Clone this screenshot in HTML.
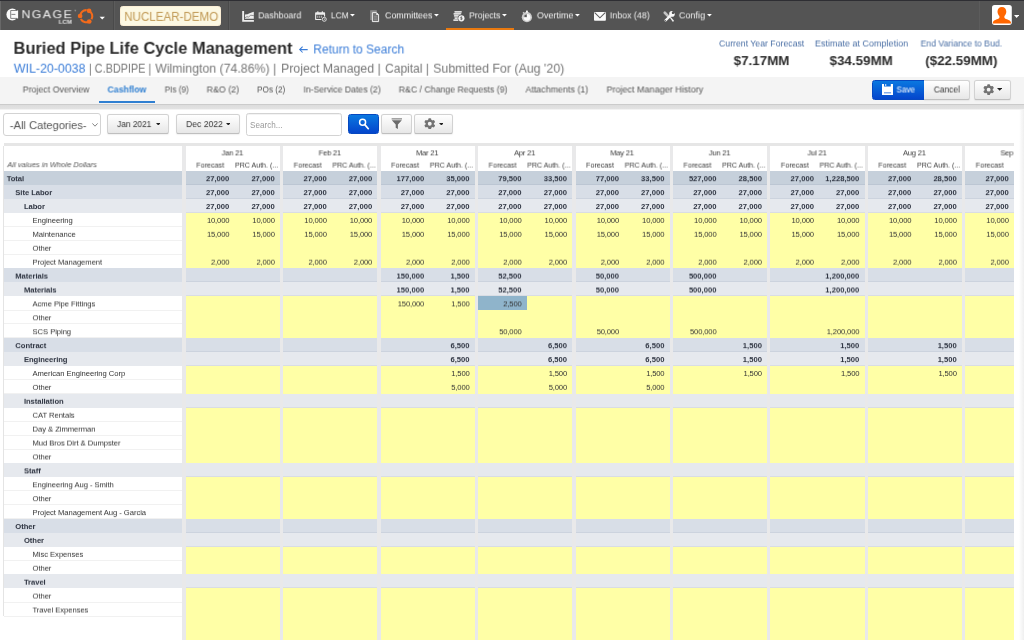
<!DOCTYPE html><html><head><meta charset="utf-8"><title>Buried Pipe Life Cycle Management</title><style>
html,body{margin:0;padding:0}body{width:1024px;height:640px;overflow:hidden;background:#fff;font-family:"Liberation Sans", sans-serif;position:relative}
.layer{position:absolute;left:0;top:0;width:1024px;height:640px;overflow:hidden}.a{position:absolute}.t{display:block;white-space:nowrap}.w{position:absolute;white-space:nowrap;filter:blur(0px)}.r{position:absolute;left:0;width:1024px;height:9px;filter:blur(0px)}
.n{position:absolute;white-space:nowrap;text-align:right;font-size:7.65px;line-height:9px;color:#333;width:60px;letter-spacing:-.16px}
.nb{font-weight:700;color:#2d3340;letter-spacing:0}
.l{position:absolute;white-space:nowrap;font-size:7.65px;line-height:9px;color:#333;letter-spacing:-.05px}
.lb{font-weight:700;color:#2d3340}
.btn{position:absolute;box-sizing:border-box;border:1px solid #d2d2d2;border-bottom-color:#bfbfbf;border-radius:2.6px;background:linear-gradient(#ffffff,#e7e7e7);box-shadow:0 0.7px 1.4px rgba(0,0,0,.06)}
.bp{position:absolute;box-sizing:border-box;border:1px solid #0648c0;border-radius:2.6px;background:linear-gradient(#0a78e0,#0445cc)}

</style></head><body><div id="page" class="layer">
<div class="a" style="left:0;top:0;width:1024px;height:29.6px;background:#545454"></div>
<div class="a" style="left:0;top:0;width:1024px;height:1.3px;background:#2e2e33"></div>
<div class="a" style="left:0;top:1.3px;width:1.1px;height:28.3px;background:#686868"></div>
<div class="a" style="left:113.2px;top:1.3px;width:0.7px;height:28.3px;background:#4a4a4a"></div><div class="a" style="left:113.9px;top:1.3px;width:0.7px;height:28.3px;background:#5c5c5c"></div>
<div class="a" style="left:228.3px;top:1.3px;width:0.7px;height:28.3px;background:#4a4a4a"></div><div class="a" style="left:229.0px;top:1.3px;width:0.7px;height:28.3px;background:#5c5c5c"></div>
<div class="a" style="left:978.6px;top:1.3px;width:0.7px;height:28.3px;background:#4a4a4a"></div><div class="a" style="left:979.3000000000001px;top:1.3px;width:0.7px;height:28.3px;background:#5c5c5c"></div>
<svg class="a" style="left:0;top:0" width="112" height="30" viewBox="0 0 112 30"><clipPath id="lc"><rect x="0" y="0" width="16.3" height="30"/></clipPath><circle cx="12.3" cy="14.5" r="5.9" fill="#fafafa" clip-path="url(#lc)"/><rect x="10.6" y="10.4" width="7.5" height="8.1" fill="#fafafa"/><path d="M17.2 10.5H10.7V18.4H17.2M11.400 14.400H15.400" fill="none" stroke="#5e5e5e" stroke-width=".75"/><g fill="none" stroke="#f26a1b" stroke-width="2.1"><path d="M89.06 10.81A6.1 6.1 0 0 1 91.48 19.25"/><path d="M89.25 21.48A6.1 6.1 0 0 1 80.81 19.06"/><path d="M80.10 15.99A6.1 6.1 0 0 1 86.63 10.11"/></g><g fill="#f26a1b"><circle cx="89.06" cy="10.81" r="2.35"/><circle cx="89.25" cy="21.48" r="2.35"/><circle cx="80.10" cy="15.99" r="2.35"/></g><path d="M99.6 16.8h5.3l-2.650 2.600z" fill="#fff"/><path d="M74.400 10.200h1.800M75.300 10.200v1.300" stroke="#bbb" stroke-width=".45" fill="none"/></svg>
<div class="a" style="left:120.3px;top:6.1px;width:101.1px;height:19.7px;box-sizing:border-box;background:#fcf8e3;border:0.7px solid #fbeed5;border-radius:2.6px"></div>
<svg class="a" style="left:0;top:0" width="1024" height="30" viewBox="0 0 1024 30" fill="#ededed"><path d="M242.2 11h1.9v9h9.8v1.800h-11.700z"/><path d="M245 18.800v-4.200l2.500-.4 2-1 2-.6 2.300-.8v7z"/><path d="M245 17.700l2-1.100 1.500.6 2-2 3.300.4" fill="none" stroke="#666" stroke-width=".7"/><path d="M316 12.300h8.200a.9.9 0 0 1 .9.9v6a.9.9 0 0 1-.9.9h-8.200a.9.9 0 0 1-.9-.9v-6a.9.9 0 0 1 .9-.9zM316.200 14.700v4.200h7.800v-4.200z" fill-rule="evenodd"/><rect x="317.200" y="11.200" width="1.300" height="1.800" rx=".5"/><rect x="321.700" y="11.200" width="1.300" height="1.800" rx=".5"/><rect x="317.200" y="15.700" width="1.100" height="2.200" opacity=".55"/><rect x="319.100" y="15.700" width="1.100" height="2.200" opacity=".55"/><rect x="321" y="15.700" width="1.100" height="2.200" opacity=".55"/><circle cx="324.300" cy="19.300" r="2.900" fill="#545454"/><circle cx="324.300" cy="19.300" r="2" fill="none" stroke="#e4e4e4" stroke-width=".9"/><path d="M324.300 18.200v1.300h.9" fill="none" stroke="#e4e4e4" stroke-width=".6"/><path d="M370.200 10.300h6.600v1.900h-4.800v7.800h-1.800z" fill="#909090"/><path d="M371.100 10.300v9.700M372 11v9" stroke="#7a7a7a" stroke-width=".35" fill="none"/><path d="M371.900 12.100h4.700l2.500 2.500v7.500h-7.200z" fill="#747474"/><path d="M372.400 12.600h4l2.200 2.200v6.800h-6.200z" fill="none" stroke="#ededed" stroke-width="1"/><path d="M376.300 12.400v2.500h2.600z" fill="#ededed"/><path d="M374 16.600h3.200M374 18h3.200M374 19.400h3.200" stroke="#9a9a9a" stroke-width=".6" fill="none"/><g fill="#dedede"><rect x="454.300" y="11" width="7.600" height="1.750" rx=".8"/><rect x="453.400" y="13.050" width="8" height="1.750" rx=".8"/><rect x="453.800" y="15.100" width="7" height="1.750" rx=".8"/><rect x="454.300" y="17.150" width="5" height="1.750" rx=".8"/><rect x="453.200" y="19.200" width="6" height="1.750" rx=".8"/></g><circle cx="461.400" cy="18.300" r="3.700" fill="#545454"/><circle cx="461.400" cy="18.300" r="3.100" fill="#f4f4f4"/><path d="M461.400 16.400v3.800M462.300 17.200h-1.300a.5.500 0 0 0 0 1.100h.800a.5.500 0 0 1 0 1.100h-1.400" stroke="#555" stroke-width=".6" fill="none"/><circle cx="526.900" cy="17.200" r="5.100" fill="#cdcdcd"/><rect x="526" y="10.500" width="1.900" height="2.200" rx=".5" fill="#f4f4f4"/><path d="M523 13.300l1-1" stroke="#cdcdcd" stroke-width="1.300"/><circle cx="527" cy="17.300" r="3.400" fill="#fbfbfb"/><path d="M527 17.300v-3.400a3.400 3.400 0 0 0-3.400 3.400z" fill="#9a9a9a"/><circle cx="525.700" cy="16" r="1" fill="#555"/><rect x="594" y="12" width="11.900" height="8.700" rx=".9" fill="#fafafa"/><path d="M594.700 12.700l5.250 5.100 5.250-5.100" fill="none" stroke="#5a5a5a" stroke-width="1.050"/><path d="M664.800 12.800l3.300 3.300" stroke="#c4c4c4" stroke-width="2.700" stroke-linecap="round" fill="none"/><path d="M668.300 16.300l1.400 1.400" stroke="#dcdcdc" stroke-width="1.300" fill="none"/><path d="M669.800 17.500l.900-.500 3.200 3.600-.300.900-.900.200z" fill="#f2f2f2"/><path d="M670.600 15.500l-5 4.900" stroke="#f6f6f6" stroke-width="2.300" stroke-linecap="round" fill="none"/><circle cx="672" cy="13.900" r="2.800" fill="#fafafa"/><path d="M672 13.900l1-3.300 2.600 2.400z" fill="#545454"/><circle cx="673" cy="12.800" r="1.250" fill="#545454"/><circle cx="665.400" cy="20.600" r=".7" fill="#666"/></svg>
<svg class="a" style="left:350.0px;top:14.1px" width="4.9" height="2.5" viewBox="0 0 4.9 2.5"><path d="M0 0h4.9l-2.45 2.5z" fill="#fff"/></svg>
<svg class="a" style="left:433.9px;top:14.1px" width="4.9" height="2.5" viewBox="0 0 4.9 2.5"><path d="M0 0h4.9l-2.45 2.5z" fill="#fff"/></svg>
<svg class="a" style="left:502.2px;top:14.1px" width="4.9" height="2.5" viewBox="0 0 4.9 2.5"><path d="M0 0h4.9l-2.45 2.5z" fill="#fff"/></svg>
<svg class="a" style="left:575.2px;top:14.1px" width="4.9" height="2.5" viewBox="0 0 4.9 2.5"><path d="M0 0h4.9l-2.45 2.5z" fill="#fff"/></svg>
<svg class="a" style="left:706.9px;top:14.1px" width="4.9" height="2.5" viewBox="0 0 4.9 2.5"><path d="M0 0h4.9l-2.45 2.5z" fill="#fff"/></svg>
<svg class="a" style="left:1013.6px;top:14.9px" width="5.2" height="3.0" viewBox="0 0 5.2 3.0"><path d="M0 0h5.2l-2.6 3.0z" fill="#fff"/></svg>
<div class="a" style="left:446.2px;top:27.8px;width:68.1px;height:1.8px;background:#e9790f"></div>
<svg class="a" style="left:992.3px;top:5.3px" width="19.8" height="19.9" viewBox="0 0 19.8 19.9"><rect width="19.8" height="19.9" rx="2.6" fill="#fff"/><path d="M9.9 1.9c2.6 0 4.4 2 4.4 4.7 0 1.9-.8 3.6-1.9 4.5v1.3c0 .8 1 1.3 2.6 1.9 2.2.8 3.7 1.7 4 3.3v.9H.8v-.9c.3-1.6 1.8-2.5 4-3.3 1.6-.6 2.6-1.1 2.6-1.9v-1.3C6.300 10.2 5.500 8.500 5.500 6.600c0-2.700 1.800-4.700 4.400-4.700z" fill="#ff6600"/></svg>
<svg class="a" style="left:298px;top:44px" width="12" height="11" viewBox="0 0 12 11"><path d="M1.700 5.600h8M4.600 2.700L1.700 5.600l2.900 2.900" fill="none" stroke="#3b7dd8" stroke-width="1.050"/></svg>
<div class="a" style="left:0;top:77.2px;width:1024px;height:26.4px;background:#f4f4f4"></div>
<div class="a" style="left:0;top:103.7px;width:1024px;height:1px;background:#cbcbcb"></div>
<div class="a" style="left:0;top:104.7px;width:1024px;height:4.9px;background:linear-gradient(#dcdcdc,#e2e2e2 78%,#fff)"></div>
<div class="a" style="left:99.1px;top:100.8px;width:55.5px;height:2.2px;background:#2f7fd1"></div>
<div class="bp" style="left:872.1px;top:80.1px;width:52.6px;height:19.6px;border-radius:2.6px 0 0 2.6px"></div>
<div class="btn" style="left:924.2px;top:80.1px;width:45.4px;height:19.6px;border-radius:0 2.6px 2.6px 0;border-left:none"></div>
<div class="btn" style="left:973.8px;top:80.1px;width:37.6px;height:19.6px"></div>
<svg class="a" style="left:881.9px;top:83.5px" width="11.2" height="11.3" viewBox="0 0 11.2 11.3"><path d="M0 0h2v2.600h6.800V0h2.200v11.200H0zM3.300 0h.9v2.100h-.9zM2 8.400h7.100v.9H2z" fill="#fff" fill-rule="evenodd"/></svg>
<svg class="a" style="left:982.9px;top:83.5px" width="11.3" height="11.3" viewBox="0 0 12 12" fill="#737373"><rect x="4.500" y=".2" width="3" height="3.200" rx=".9" transform="rotate(0 6 6)"/><rect x="4.500" y=".2" width="3" height="3.200" rx=".9" transform="rotate(60 6 6)"/><rect x="4.500" y=".2" width="3" height="3.200" rx=".9" transform="rotate(120 6 6)"/><rect x="4.500" y=".2" width="3" height="3.200" rx=".9" transform="rotate(180 6 6)"/><rect x="4.500" y=".2" width="3" height="3.200" rx=".9" transform="rotate(240 6 6)"/><rect x="4.500" y=".2" width="3" height="3.200" rx=".9" transform="rotate(300 6 6)"/><circle cx="6" cy="6" r="3.200" fill="none" stroke="#737373" stroke-width="2.300"/></svg>
<svg class="a" style="left:996.9px;top:88.2px" width="5.3" height="2.8" viewBox="0 0 5.3 2.8"><path d="M0 0h5.3l-2.65 2.8z" fill="#222"/></svg>
<div class="a" style="left:3.2px;top:112.6px;width:97.9px;height:23.1px;box-sizing:border-box;border:1px solid #d3d3d3;border-radius:3px;background:#fff"></div>
<svg class="a" style="left:92.4px;top:122.6px" width="6" height="4" viewBox="0 0 6 4"><path d="M.4.4L3 3.200 5.600.4" fill="none" stroke="#666" stroke-width=".8"/></svg>
<div class="btn" style="left:107.3px;top:114.4px;width:61.9px;height:19.5px"></div>
<div class="btn" style="left:175.9px;top:114.4px;width:64.4px;height:19.5px"></div>
<svg class="a" style="left:155.5px;top:122.6px" width="4.6" height="2.5" viewBox="0 0 4.6 2.5"><path d="M0 0h4.6l-2.3 2.5z" fill="#222"/></svg>
<svg class="a" style="left:225.8px;top:122.6px" width="4.6" height="2.5" viewBox="0 0 4.6 2.5"><path d="M0 0h4.6l-2.3 2.5z" fill="#222"/></svg>
<div class="a" style="left:246.1px;top:112.8px;width:96.4px;height:22.9px;box-sizing:border-box;border:1px solid #d3d3d3;border-radius:2.6px;background:#fff;box-shadow:inset 0 .7px .7px rgba(0,0,0,.07)"></div>
<div class="bp" style="left:348px;top:114.2px;width:30.9px;height:19.6px"></div>
<svg class="a" style="left:357px;top:116.500px" width="14" height="14" viewBox="0 0 14 14"><circle cx="5.600" cy="5.300" r="3" fill="none" stroke="#fff" stroke-width="1.500"/><path d="M7.800 7.600l3.500 4.100" stroke="#fff" stroke-width="1.700" stroke-linecap="round"/></svg>
<div class="btn" style="left:381.1px;top:114.2px;width:30.6px;height:19.6px"></div>
<svg class="a" style="left:391px;top:117.500px" width="12" height="12" viewBox="0 0 12 12" fill="#6b6b6b"><rect x=".6" y=".4" width="10.400" height="1"/><path d="M.8 2.200h10l-3.900 4.300v4.400l-2.200-1.100v-3.300z"/></svg>
<div class="btn" style="left:414.4px;top:114.2px;width:39.1px;height:19.6px"></div>
<svg class="a" style="left:423.9px;top:117.8px" width="11.5" height="11.5" viewBox="0 0 12 12" fill="#737373"><rect x="4.500" y=".2" width="3" height="3.200" rx=".9" transform="rotate(0 6 6)"/><rect x="4.500" y=".2" width="3" height="3.200" rx=".9" transform="rotate(60 6 6)"/><rect x="4.500" y=".2" width="3" height="3.200" rx=".9" transform="rotate(120 6 6)"/><rect x="4.500" y=".2" width="3" height="3.200" rx=".9" transform="rotate(180 6 6)"/><rect x="4.500" y=".2" width="3" height="3.200" rx=".9" transform="rotate(240 6 6)"/><rect x="4.500" y=".2" width="3" height="3.200" rx=".9" transform="rotate(300 6 6)"/><circle cx="6" cy="6" r="3.200" fill="none" stroke="#737373" stroke-width="2.300"/></svg>
<svg class="a" style="left:438.7px;top:122.7px" width="4.8" height="2.6" viewBox="0 0 4.8 2.6"><path d="M0 0h4.8l-2.4 2.6z" fill="#222"/></svg>
<div class="a" style="left:4.0px;top:142.8px;width:1010.0px;height:3.1px;background:#e6e6e6"></div>
<div class="a" style="left:182.2px;top:145.9px;width:3.700000000000017px;height:494.1px;background:#e9e9ea"></div>
<div class="a" style="left:280.00px;top:145.9px;width:3.33px;height:494.1px;background:#e9e9ea"></div>
<div class="a" style="left:377.43px;top:145.9px;width:3.33px;height:494.1px;background:#e9e9ea"></div>
<div class="a" style="left:474.86px;top:145.9px;width:3.33px;height:494.1px;background:#e9e9ea"></div>
<div class="a" style="left:572.29px;top:145.9px;width:3.33px;height:494.1px;background:#e9e9ea"></div>
<div class="a" style="left:669.72px;top:145.9px;width:3.33px;height:494.1px;background:#e9e9ea"></div>
<div class="a" style="left:767.15px;top:145.9px;width:3.33px;height:494.1px;background:#e9e9ea"></div>
<div class="a" style="left:864.58px;top:145.9px;width:3.33px;height:494.1px;background:#e9e9ea"></div>
<div class="a" style="left:962.01px;top:145.9px;width:3.33px;height:494.1px;background:#e9e9ea"></div>
<div class="a" style="left:3.4px;top:145.9px;width:0.7px;height:470.32px;background:#e4e4e4"></div>
<div class="a" style="left:4.0px;top:171.00px;width:178.2px;height:13.96px;background:#c6d0db"></div>
<div class="a" style="left:185.90px;top:171.00px;width:94.10px;height:13.96px;background:#c6d0db;box-shadow:inset 0 -0.7px 0 rgba(90,110,140,.13)"></div>
<div class="a" style="left:283.33px;top:171.00px;width:94.10px;height:13.96px;background:#c6d0db;box-shadow:inset 0 -0.7px 0 rgba(90,110,140,.13)"></div>
<div class="a" style="left:380.76px;top:171.00px;width:94.10px;height:13.96px;background:#c6d0db;box-shadow:inset 0 -0.7px 0 rgba(90,110,140,.13)"></div>
<div class="a" style="left:478.19px;top:171.00px;width:94.10px;height:13.96px;background:#c6d0db;box-shadow:inset 0 -0.7px 0 rgba(90,110,140,.13)"></div>
<div class="a" style="left:575.62px;top:171.00px;width:94.10px;height:13.96px;background:#c6d0db;box-shadow:inset 0 -0.7px 0 rgba(90,110,140,.13)"></div>
<div class="a" style="left:673.05px;top:171.00px;width:94.10px;height:13.96px;background:#c6d0db;box-shadow:inset 0 -0.7px 0 rgba(90,110,140,.13)"></div>
<div class="a" style="left:770.48px;top:171.00px;width:94.10px;height:13.96px;background:#c6d0db;box-shadow:inset 0 -0.7px 0 rgba(90,110,140,.13)"></div>
<div class="a" style="left:867.91px;top:171.00px;width:94.10px;height:13.96px;background:#c6d0db;box-shadow:inset 0 -0.7px 0 rgba(90,110,140,.13)"></div>
<div class="a" style="left:965.34px;top:171.00px;width:48.66px;height:13.96px;background:#c6d0db;box-shadow:inset 0 -0.7px 0 rgba(90,110,140,.13)"></div>
<div class="a" style="left:4.0px;top:184.91px;width:178.2px;height:13.96px;background:#d8dee7"></div>
<div class="a" style="left:185.90px;top:184.91px;width:94.10px;height:13.96px;background:#d8dee7;box-shadow:inset 0 -0.7px 0 rgba(90,110,140,.13)"></div>
<div class="a" style="left:283.33px;top:184.91px;width:94.10px;height:13.96px;background:#d8dee7;box-shadow:inset 0 -0.7px 0 rgba(90,110,140,.13)"></div>
<div class="a" style="left:380.76px;top:184.91px;width:94.10px;height:13.96px;background:#d8dee7;box-shadow:inset 0 -0.7px 0 rgba(90,110,140,.13)"></div>
<div class="a" style="left:478.19px;top:184.91px;width:94.10px;height:13.96px;background:#d8dee7;box-shadow:inset 0 -0.7px 0 rgba(90,110,140,.13)"></div>
<div class="a" style="left:575.62px;top:184.91px;width:94.10px;height:13.96px;background:#d8dee7;box-shadow:inset 0 -0.7px 0 rgba(90,110,140,.13)"></div>
<div class="a" style="left:673.05px;top:184.91px;width:94.10px;height:13.96px;background:#d8dee7;box-shadow:inset 0 -0.7px 0 rgba(90,110,140,.13)"></div>
<div class="a" style="left:770.48px;top:184.91px;width:94.10px;height:13.96px;background:#d8dee7;box-shadow:inset 0 -0.7px 0 rgba(90,110,140,.13)"></div>
<div class="a" style="left:867.91px;top:184.91px;width:94.10px;height:13.96px;background:#d8dee7;box-shadow:inset 0 -0.7px 0 rgba(90,110,140,.13)"></div>
<div class="a" style="left:965.34px;top:184.91px;width:48.66px;height:13.96px;background:#d8dee7;box-shadow:inset 0 -0.7px 0 rgba(90,110,140,.13)"></div>
<div class="a" style="left:4.0px;top:198.83px;width:178.2px;height:13.96px;background:#e6e9ee"></div>
<div class="a" style="left:185.90px;top:198.83px;width:94.10px;height:13.96px;background:#e6e9ee;box-shadow:inset 0 -0.7px 0 rgba(90,110,140,.13)"></div>
<div class="a" style="left:283.33px;top:198.83px;width:94.10px;height:13.96px;background:#e6e9ee;box-shadow:inset 0 -0.7px 0 rgba(90,110,140,.13)"></div>
<div class="a" style="left:380.76px;top:198.83px;width:94.10px;height:13.96px;background:#e6e9ee;box-shadow:inset 0 -0.7px 0 rgba(90,110,140,.13)"></div>
<div class="a" style="left:478.19px;top:198.83px;width:94.10px;height:13.96px;background:#e6e9ee;box-shadow:inset 0 -0.7px 0 rgba(90,110,140,.13)"></div>
<div class="a" style="left:575.62px;top:198.83px;width:94.10px;height:13.96px;background:#e6e9ee;box-shadow:inset 0 -0.7px 0 rgba(90,110,140,.13)"></div>
<div class="a" style="left:673.05px;top:198.83px;width:94.10px;height:13.96px;background:#e6e9ee;box-shadow:inset 0 -0.7px 0 rgba(90,110,140,.13)"></div>
<div class="a" style="left:770.48px;top:198.83px;width:94.10px;height:13.96px;background:#e6e9ee;box-shadow:inset 0 -0.7px 0 rgba(90,110,140,.13)"></div>
<div class="a" style="left:867.91px;top:198.83px;width:94.10px;height:13.96px;background:#e6e9ee;box-shadow:inset 0 -0.7px 0 rgba(90,110,140,.13)"></div>
<div class="a" style="left:965.34px;top:198.83px;width:48.66px;height:13.96px;background:#e6e9ee;box-shadow:inset 0 -0.7px 0 rgba(90,110,140,.13)"></div>
<div class="a" style="left:185.90px;top:212.74px;width:94.10px;height:13.96px;background:#ffffa6"></div>
<div class="a" style="left:283.33px;top:212.74px;width:94.10px;height:13.96px;background:#ffffa6"></div>
<div class="a" style="left:380.76px;top:212.74px;width:94.10px;height:13.96px;background:#ffffa6"></div>
<div class="a" style="left:478.19px;top:212.74px;width:94.10px;height:13.96px;background:#ffffa6"></div>
<div class="a" style="left:575.62px;top:212.74px;width:94.10px;height:13.96px;background:#ffffa6"></div>
<div class="a" style="left:673.05px;top:212.74px;width:94.10px;height:13.96px;background:#ffffa6"></div>
<div class="a" style="left:770.48px;top:212.74px;width:94.10px;height:13.96px;background:#ffffa6"></div>
<div class="a" style="left:867.91px;top:212.74px;width:94.10px;height:13.96px;background:#ffffa6"></div>
<div class="a" style="left:965.34px;top:212.74px;width:48.66px;height:13.96px;background:#ffffa6"></div>
<div class="a" style="left:4.0px;top:226.05px;width:178.2px;height:0.6px;background:#f1f1f1"></div>
<div class="a" style="left:185.90px;top:226.65px;width:94.10px;height:13.96px;background:#ffffa6"></div>
<div class="a" style="left:283.33px;top:226.65px;width:94.10px;height:13.96px;background:#ffffa6"></div>
<div class="a" style="left:380.76px;top:226.65px;width:94.10px;height:13.96px;background:#ffffa6"></div>
<div class="a" style="left:478.19px;top:226.65px;width:94.10px;height:13.96px;background:#ffffa6"></div>
<div class="a" style="left:575.62px;top:226.65px;width:94.10px;height:13.96px;background:#ffffa6"></div>
<div class="a" style="left:673.05px;top:226.65px;width:94.10px;height:13.96px;background:#ffffa6"></div>
<div class="a" style="left:770.48px;top:226.65px;width:94.10px;height:13.96px;background:#ffffa6"></div>
<div class="a" style="left:867.91px;top:226.65px;width:94.10px;height:13.96px;background:#ffffa6"></div>
<div class="a" style="left:965.34px;top:226.65px;width:48.66px;height:13.96px;background:#ffffa6"></div>
<div class="a" style="left:4.0px;top:239.97px;width:178.2px;height:0.6px;background:#f1f1f1"></div>
<div class="a" style="left:185.90px;top:240.56px;width:94.10px;height:13.96px;background:#ffffa6"></div>
<div class="a" style="left:283.33px;top:240.56px;width:94.10px;height:13.96px;background:#ffffa6"></div>
<div class="a" style="left:380.76px;top:240.56px;width:94.10px;height:13.96px;background:#ffffa6"></div>
<div class="a" style="left:478.19px;top:240.56px;width:94.10px;height:13.96px;background:#ffffa6"></div>
<div class="a" style="left:575.62px;top:240.56px;width:94.10px;height:13.96px;background:#ffffa6"></div>
<div class="a" style="left:673.05px;top:240.56px;width:94.10px;height:13.96px;background:#ffffa6"></div>
<div class="a" style="left:770.48px;top:240.56px;width:94.10px;height:13.96px;background:#ffffa6"></div>
<div class="a" style="left:867.91px;top:240.56px;width:94.10px;height:13.96px;background:#ffffa6"></div>
<div class="a" style="left:965.34px;top:240.56px;width:48.66px;height:13.96px;background:#ffffa6"></div>
<div class="a" style="left:4.0px;top:253.88px;width:178.2px;height:0.6px;background:#f1f1f1"></div>
<div class="a" style="left:185.90px;top:254.48px;width:94.10px;height:13.96px;background:#ffffa6"></div>
<div class="a" style="left:283.33px;top:254.48px;width:94.10px;height:13.96px;background:#ffffa6"></div>
<div class="a" style="left:380.76px;top:254.48px;width:94.10px;height:13.96px;background:#ffffa6"></div>
<div class="a" style="left:478.19px;top:254.48px;width:94.10px;height:13.96px;background:#ffffa6"></div>
<div class="a" style="left:575.62px;top:254.48px;width:94.10px;height:13.96px;background:#ffffa6"></div>
<div class="a" style="left:673.05px;top:254.48px;width:94.10px;height:13.96px;background:#ffffa6"></div>
<div class="a" style="left:770.48px;top:254.48px;width:94.10px;height:13.96px;background:#ffffa6"></div>
<div class="a" style="left:867.91px;top:254.48px;width:94.10px;height:13.96px;background:#ffffa6"></div>
<div class="a" style="left:965.34px;top:254.48px;width:48.66px;height:13.96px;background:#ffffa6"></div>
<div class="a" style="left:4.0px;top:267.79px;width:178.2px;height:0.6px;background:#f1f1f1"></div>
<div class="a" style="left:4.0px;top:268.39px;width:178.2px;height:13.96px;background:#d8dee7"></div>
<div class="a" style="left:185.90px;top:268.39px;width:94.10px;height:13.96px;background:#d8dee7;box-shadow:inset 0 -0.7px 0 rgba(90,110,140,.13)"></div>
<div class="a" style="left:283.33px;top:268.39px;width:94.10px;height:13.96px;background:#d8dee7;box-shadow:inset 0 -0.7px 0 rgba(90,110,140,.13)"></div>
<div class="a" style="left:380.76px;top:268.39px;width:94.10px;height:13.96px;background:#d8dee7;box-shadow:inset 0 -0.7px 0 rgba(90,110,140,.13)"></div>
<div class="a" style="left:478.19px;top:268.39px;width:94.10px;height:13.96px;background:#d8dee7;box-shadow:inset 0 -0.7px 0 rgba(90,110,140,.13)"></div>
<div class="a" style="left:575.62px;top:268.39px;width:94.10px;height:13.96px;background:#d8dee7;box-shadow:inset 0 -0.7px 0 rgba(90,110,140,.13)"></div>
<div class="a" style="left:673.05px;top:268.39px;width:94.10px;height:13.96px;background:#d8dee7;box-shadow:inset 0 -0.7px 0 rgba(90,110,140,.13)"></div>
<div class="a" style="left:770.48px;top:268.39px;width:94.10px;height:13.96px;background:#d8dee7;box-shadow:inset 0 -0.7px 0 rgba(90,110,140,.13)"></div>
<div class="a" style="left:867.91px;top:268.39px;width:94.10px;height:13.96px;background:#d8dee7;box-shadow:inset 0 -0.7px 0 rgba(90,110,140,.13)"></div>
<div class="a" style="left:965.34px;top:268.39px;width:48.66px;height:13.96px;background:#d8dee7;box-shadow:inset 0 -0.7px 0 rgba(90,110,140,.13)"></div>
<div class="a" style="left:4.0px;top:282.30px;width:178.2px;height:13.96px;background:#e6e9ee"></div>
<div class="a" style="left:185.90px;top:282.30px;width:94.10px;height:13.96px;background:#e6e9ee;box-shadow:inset 0 -0.7px 0 rgba(90,110,140,.13)"></div>
<div class="a" style="left:283.33px;top:282.30px;width:94.10px;height:13.96px;background:#e6e9ee;box-shadow:inset 0 -0.7px 0 rgba(90,110,140,.13)"></div>
<div class="a" style="left:380.76px;top:282.30px;width:94.10px;height:13.96px;background:#e6e9ee;box-shadow:inset 0 -0.7px 0 rgba(90,110,140,.13)"></div>
<div class="a" style="left:478.19px;top:282.30px;width:94.10px;height:13.96px;background:#e6e9ee;box-shadow:inset 0 -0.7px 0 rgba(90,110,140,.13)"></div>
<div class="a" style="left:575.62px;top:282.30px;width:94.10px;height:13.96px;background:#e6e9ee;box-shadow:inset 0 -0.7px 0 rgba(90,110,140,.13)"></div>
<div class="a" style="left:673.05px;top:282.30px;width:94.10px;height:13.96px;background:#e6e9ee;box-shadow:inset 0 -0.7px 0 rgba(90,110,140,.13)"></div>
<div class="a" style="left:770.48px;top:282.30px;width:94.10px;height:13.96px;background:#e6e9ee;box-shadow:inset 0 -0.7px 0 rgba(90,110,140,.13)"></div>
<div class="a" style="left:867.91px;top:282.30px;width:94.10px;height:13.96px;background:#e6e9ee;box-shadow:inset 0 -0.7px 0 rgba(90,110,140,.13)"></div>
<div class="a" style="left:965.34px;top:282.30px;width:48.66px;height:13.96px;background:#e6e9ee;box-shadow:inset 0 -0.7px 0 rgba(90,110,140,.13)"></div>
<div class="a" style="left:185.90px;top:296.22px;width:94.10px;height:13.96px;background:#ffffa6"></div>
<div class="a" style="left:283.33px;top:296.22px;width:94.10px;height:13.96px;background:#ffffa6"></div>
<div class="a" style="left:380.76px;top:296.22px;width:94.10px;height:13.96px;background:#ffffa6"></div>
<div class="a" style="left:478.19px;top:296.22px;width:94.10px;height:13.96px;background:#ffffa6"></div>
<div class="a" style="left:575.62px;top:296.22px;width:94.10px;height:13.96px;background:#ffffa6"></div>
<div class="a" style="left:673.05px;top:296.22px;width:94.10px;height:13.96px;background:#ffffa6"></div>
<div class="a" style="left:770.48px;top:296.22px;width:94.10px;height:13.96px;background:#ffffa6"></div>
<div class="a" style="left:867.91px;top:296.22px;width:94.10px;height:13.96px;background:#ffffa6"></div>
<div class="a" style="left:965.34px;top:296.22px;width:48.66px;height:13.96px;background:#ffffa6"></div>
<div class="a" style="left:4.0px;top:309.53px;width:178.2px;height:0.6px;background:#f1f1f1"></div>
<div class="a" style="left:478.19px;top:296.22px;width:48.6px;height:13.91px;background:#8fb4cb"></div>
<div class="a" style="left:185.90px;top:310.13px;width:94.10px;height:13.96px;background:#ffffa6"></div>
<div class="a" style="left:283.33px;top:310.13px;width:94.10px;height:13.96px;background:#ffffa6"></div>
<div class="a" style="left:380.76px;top:310.13px;width:94.10px;height:13.96px;background:#ffffa6"></div>
<div class="a" style="left:478.19px;top:310.13px;width:94.10px;height:13.96px;background:#ffffa6"></div>
<div class="a" style="left:575.62px;top:310.13px;width:94.10px;height:13.96px;background:#ffffa6"></div>
<div class="a" style="left:673.05px;top:310.13px;width:94.10px;height:13.96px;background:#ffffa6"></div>
<div class="a" style="left:770.48px;top:310.13px;width:94.10px;height:13.96px;background:#ffffa6"></div>
<div class="a" style="left:867.91px;top:310.13px;width:94.10px;height:13.96px;background:#ffffa6"></div>
<div class="a" style="left:965.34px;top:310.13px;width:48.66px;height:13.96px;background:#ffffa6"></div>
<div class="a" style="left:4.0px;top:323.44px;width:178.2px;height:0.6px;background:#f1f1f1"></div>
<div class="a" style="left:185.90px;top:324.04px;width:94.10px;height:13.96px;background:#ffffa6"></div>
<div class="a" style="left:283.33px;top:324.04px;width:94.10px;height:13.96px;background:#ffffa6"></div>
<div class="a" style="left:380.76px;top:324.04px;width:94.10px;height:13.96px;background:#ffffa6"></div>
<div class="a" style="left:478.19px;top:324.04px;width:94.10px;height:13.96px;background:#ffffa6"></div>
<div class="a" style="left:575.62px;top:324.04px;width:94.10px;height:13.96px;background:#ffffa6"></div>
<div class="a" style="left:673.05px;top:324.04px;width:94.10px;height:13.96px;background:#ffffa6"></div>
<div class="a" style="left:770.48px;top:324.04px;width:94.10px;height:13.96px;background:#ffffa6"></div>
<div class="a" style="left:867.91px;top:324.04px;width:94.10px;height:13.96px;background:#ffffa6"></div>
<div class="a" style="left:965.34px;top:324.04px;width:48.66px;height:13.96px;background:#ffffa6"></div>
<div class="a" style="left:4.0px;top:337.36px;width:178.2px;height:0.6px;background:#f1f1f1"></div>
<div class="a" style="left:4.0px;top:337.96px;width:178.2px;height:13.96px;background:#d8dee7"></div>
<div class="a" style="left:185.90px;top:337.96px;width:94.10px;height:13.96px;background:#d8dee7;box-shadow:inset 0 -0.7px 0 rgba(90,110,140,.13)"></div>
<div class="a" style="left:283.33px;top:337.96px;width:94.10px;height:13.96px;background:#d8dee7;box-shadow:inset 0 -0.7px 0 rgba(90,110,140,.13)"></div>
<div class="a" style="left:380.76px;top:337.96px;width:94.10px;height:13.96px;background:#d8dee7;box-shadow:inset 0 -0.7px 0 rgba(90,110,140,.13)"></div>
<div class="a" style="left:478.19px;top:337.96px;width:94.10px;height:13.96px;background:#d8dee7;box-shadow:inset 0 -0.7px 0 rgba(90,110,140,.13)"></div>
<div class="a" style="left:575.62px;top:337.96px;width:94.10px;height:13.96px;background:#d8dee7;box-shadow:inset 0 -0.7px 0 rgba(90,110,140,.13)"></div>
<div class="a" style="left:673.05px;top:337.96px;width:94.10px;height:13.96px;background:#d8dee7;box-shadow:inset 0 -0.7px 0 rgba(90,110,140,.13)"></div>
<div class="a" style="left:770.48px;top:337.96px;width:94.10px;height:13.96px;background:#d8dee7;box-shadow:inset 0 -0.7px 0 rgba(90,110,140,.13)"></div>
<div class="a" style="left:867.91px;top:337.96px;width:94.10px;height:13.96px;background:#d8dee7;box-shadow:inset 0 -0.7px 0 rgba(90,110,140,.13)"></div>
<div class="a" style="left:965.34px;top:337.96px;width:48.66px;height:13.96px;background:#d8dee7;box-shadow:inset 0 -0.7px 0 rgba(90,110,140,.13)"></div>
<div class="a" style="left:4.0px;top:351.87px;width:178.2px;height:13.96px;background:#e6e9ee"></div>
<div class="a" style="left:185.90px;top:351.87px;width:94.10px;height:13.96px;background:#e6e9ee;box-shadow:inset 0 -0.7px 0 rgba(90,110,140,.13)"></div>
<div class="a" style="left:283.33px;top:351.87px;width:94.10px;height:13.96px;background:#e6e9ee;box-shadow:inset 0 -0.7px 0 rgba(90,110,140,.13)"></div>
<div class="a" style="left:380.76px;top:351.87px;width:94.10px;height:13.96px;background:#e6e9ee;box-shadow:inset 0 -0.7px 0 rgba(90,110,140,.13)"></div>
<div class="a" style="left:478.19px;top:351.87px;width:94.10px;height:13.96px;background:#e6e9ee;box-shadow:inset 0 -0.7px 0 rgba(90,110,140,.13)"></div>
<div class="a" style="left:575.62px;top:351.87px;width:94.10px;height:13.96px;background:#e6e9ee;box-shadow:inset 0 -0.7px 0 rgba(90,110,140,.13)"></div>
<div class="a" style="left:673.05px;top:351.87px;width:94.10px;height:13.96px;background:#e6e9ee;box-shadow:inset 0 -0.7px 0 rgba(90,110,140,.13)"></div>
<div class="a" style="left:770.48px;top:351.87px;width:94.10px;height:13.96px;background:#e6e9ee;box-shadow:inset 0 -0.7px 0 rgba(90,110,140,.13)"></div>
<div class="a" style="left:867.91px;top:351.87px;width:94.10px;height:13.96px;background:#e6e9ee;box-shadow:inset 0 -0.7px 0 rgba(90,110,140,.13)"></div>
<div class="a" style="left:965.34px;top:351.87px;width:48.66px;height:13.96px;background:#e6e9ee;box-shadow:inset 0 -0.7px 0 rgba(90,110,140,.13)"></div>
<div class="a" style="left:185.90px;top:365.78px;width:94.10px;height:13.96px;background:#ffffa6"></div>
<div class="a" style="left:283.33px;top:365.78px;width:94.10px;height:13.96px;background:#ffffa6"></div>
<div class="a" style="left:380.76px;top:365.78px;width:94.10px;height:13.96px;background:#ffffa6"></div>
<div class="a" style="left:478.19px;top:365.78px;width:94.10px;height:13.96px;background:#ffffa6"></div>
<div class="a" style="left:575.62px;top:365.78px;width:94.10px;height:13.96px;background:#ffffa6"></div>
<div class="a" style="left:673.05px;top:365.78px;width:94.10px;height:13.96px;background:#ffffa6"></div>
<div class="a" style="left:770.48px;top:365.78px;width:94.10px;height:13.96px;background:#ffffa6"></div>
<div class="a" style="left:867.91px;top:365.78px;width:94.10px;height:13.96px;background:#ffffa6"></div>
<div class="a" style="left:965.34px;top:365.78px;width:48.66px;height:13.96px;background:#ffffa6"></div>
<div class="a" style="left:4.0px;top:379.10px;width:178.2px;height:0.6px;background:#f1f1f1"></div>
<div class="a" style="left:185.90px;top:379.69px;width:94.10px;height:13.96px;background:#ffffa6"></div>
<div class="a" style="left:283.33px;top:379.69px;width:94.10px;height:13.96px;background:#ffffa6"></div>
<div class="a" style="left:380.76px;top:379.69px;width:94.10px;height:13.96px;background:#ffffa6"></div>
<div class="a" style="left:478.19px;top:379.69px;width:94.10px;height:13.96px;background:#ffffa6"></div>
<div class="a" style="left:575.62px;top:379.69px;width:94.10px;height:13.96px;background:#ffffa6"></div>
<div class="a" style="left:673.05px;top:379.69px;width:94.10px;height:13.96px;background:#ffffa6"></div>
<div class="a" style="left:770.48px;top:379.69px;width:94.10px;height:13.96px;background:#ffffa6"></div>
<div class="a" style="left:867.91px;top:379.69px;width:94.10px;height:13.96px;background:#ffffa6"></div>
<div class="a" style="left:965.34px;top:379.69px;width:48.66px;height:13.96px;background:#ffffa6"></div>
<div class="a" style="left:4.0px;top:393.01px;width:178.2px;height:0.6px;background:#f1f1f1"></div>
<div class="a" style="left:4.0px;top:393.61px;width:178.2px;height:13.96px;background:#e6e9ee"></div>
<div class="a" style="left:185.90px;top:393.61px;width:94.10px;height:13.96px;background:#e6e9ee;box-shadow:inset 0 -0.7px 0 rgba(90,110,140,.13)"></div>
<div class="a" style="left:283.33px;top:393.61px;width:94.10px;height:13.96px;background:#e6e9ee;box-shadow:inset 0 -0.7px 0 rgba(90,110,140,.13)"></div>
<div class="a" style="left:380.76px;top:393.61px;width:94.10px;height:13.96px;background:#e6e9ee;box-shadow:inset 0 -0.7px 0 rgba(90,110,140,.13)"></div>
<div class="a" style="left:478.19px;top:393.61px;width:94.10px;height:13.96px;background:#e6e9ee;box-shadow:inset 0 -0.7px 0 rgba(90,110,140,.13)"></div>
<div class="a" style="left:575.62px;top:393.61px;width:94.10px;height:13.96px;background:#e6e9ee;box-shadow:inset 0 -0.7px 0 rgba(90,110,140,.13)"></div>
<div class="a" style="left:673.05px;top:393.61px;width:94.10px;height:13.96px;background:#e6e9ee;box-shadow:inset 0 -0.7px 0 rgba(90,110,140,.13)"></div>
<div class="a" style="left:770.48px;top:393.61px;width:94.10px;height:13.96px;background:#e6e9ee;box-shadow:inset 0 -0.7px 0 rgba(90,110,140,.13)"></div>
<div class="a" style="left:867.91px;top:393.61px;width:94.10px;height:13.96px;background:#e6e9ee;box-shadow:inset 0 -0.7px 0 rgba(90,110,140,.13)"></div>
<div class="a" style="left:965.34px;top:393.61px;width:48.66px;height:13.96px;background:#e6e9ee;box-shadow:inset 0 -0.7px 0 rgba(90,110,140,.13)"></div>
<div class="a" style="left:185.90px;top:407.52px;width:94.10px;height:13.96px;background:#ffffa6"></div>
<div class="a" style="left:283.33px;top:407.52px;width:94.10px;height:13.96px;background:#ffffa6"></div>
<div class="a" style="left:380.76px;top:407.52px;width:94.10px;height:13.96px;background:#ffffa6"></div>
<div class="a" style="left:478.19px;top:407.52px;width:94.10px;height:13.96px;background:#ffffa6"></div>
<div class="a" style="left:575.62px;top:407.52px;width:94.10px;height:13.96px;background:#ffffa6"></div>
<div class="a" style="left:673.05px;top:407.52px;width:94.10px;height:13.96px;background:#ffffa6"></div>
<div class="a" style="left:770.48px;top:407.52px;width:94.10px;height:13.96px;background:#ffffa6"></div>
<div class="a" style="left:867.91px;top:407.52px;width:94.10px;height:13.96px;background:#ffffa6"></div>
<div class="a" style="left:965.34px;top:407.52px;width:48.66px;height:13.96px;background:#ffffa6"></div>
<div class="a" style="left:4.0px;top:420.83px;width:178.2px;height:0.6px;background:#f1f1f1"></div>
<div class="a" style="left:185.90px;top:421.43px;width:94.10px;height:13.96px;background:#ffffa6"></div>
<div class="a" style="left:283.33px;top:421.43px;width:94.10px;height:13.96px;background:#ffffa6"></div>
<div class="a" style="left:380.76px;top:421.43px;width:94.10px;height:13.96px;background:#ffffa6"></div>
<div class="a" style="left:478.19px;top:421.43px;width:94.10px;height:13.96px;background:#ffffa6"></div>
<div class="a" style="left:575.62px;top:421.43px;width:94.10px;height:13.96px;background:#ffffa6"></div>
<div class="a" style="left:673.05px;top:421.43px;width:94.10px;height:13.96px;background:#ffffa6"></div>
<div class="a" style="left:770.48px;top:421.43px;width:94.10px;height:13.96px;background:#ffffa6"></div>
<div class="a" style="left:867.91px;top:421.43px;width:94.10px;height:13.96px;background:#ffffa6"></div>
<div class="a" style="left:965.34px;top:421.43px;width:48.66px;height:13.96px;background:#ffffa6"></div>
<div class="a" style="left:4.0px;top:434.75px;width:178.2px;height:0.6px;background:#f1f1f1"></div>
<div class="a" style="left:185.90px;top:435.35px;width:94.10px;height:13.96px;background:#ffffa6"></div>
<div class="a" style="left:283.33px;top:435.35px;width:94.10px;height:13.96px;background:#ffffa6"></div>
<div class="a" style="left:380.76px;top:435.35px;width:94.10px;height:13.96px;background:#ffffa6"></div>
<div class="a" style="left:478.19px;top:435.35px;width:94.10px;height:13.96px;background:#ffffa6"></div>
<div class="a" style="left:575.62px;top:435.35px;width:94.10px;height:13.96px;background:#ffffa6"></div>
<div class="a" style="left:673.05px;top:435.35px;width:94.10px;height:13.96px;background:#ffffa6"></div>
<div class="a" style="left:770.48px;top:435.35px;width:94.10px;height:13.96px;background:#ffffa6"></div>
<div class="a" style="left:867.91px;top:435.35px;width:94.10px;height:13.96px;background:#ffffa6"></div>
<div class="a" style="left:965.34px;top:435.35px;width:48.66px;height:13.96px;background:#ffffa6"></div>
<div class="a" style="left:4.0px;top:448.66px;width:178.2px;height:0.6px;background:#f1f1f1"></div>
<div class="a" style="left:185.90px;top:449.26px;width:94.10px;height:13.96px;background:#ffffa6"></div>
<div class="a" style="left:283.33px;top:449.26px;width:94.10px;height:13.96px;background:#ffffa6"></div>
<div class="a" style="left:380.76px;top:449.26px;width:94.10px;height:13.96px;background:#ffffa6"></div>
<div class="a" style="left:478.19px;top:449.26px;width:94.10px;height:13.96px;background:#ffffa6"></div>
<div class="a" style="left:575.62px;top:449.26px;width:94.10px;height:13.96px;background:#ffffa6"></div>
<div class="a" style="left:673.05px;top:449.26px;width:94.10px;height:13.96px;background:#ffffa6"></div>
<div class="a" style="left:770.48px;top:449.26px;width:94.10px;height:13.96px;background:#ffffa6"></div>
<div class="a" style="left:867.91px;top:449.26px;width:94.10px;height:13.96px;background:#ffffa6"></div>
<div class="a" style="left:965.34px;top:449.26px;width:48.66px;height:13.96px;background:#ffffa6"></div>
<div class="a" style="left:4.0px;top:462.57px;width:178.2px;height:0.6px;background:#f1f1f1"></div>
<div class="a" style="left:4.0px;top:463.17px;width:178.2px;height:13.96px;background:#e6e9ee"></div>
<div class="a" style="left:185.90px;top:463.17px;width:94.10px;height:13.96px;background:#e6e9ee;box-shadow:inset 0 -0.7px 0 rgba(90,110,140,.13)"></div>
<div class="a" style="left:283.33px;top:463.17px;width:94.10px;height:13.96px;background:#e6e9ee;box-shadow:inset 0 -0.7px 0 rgba(90,110,140,.13)"></div>
<div class="a" style="left:380.76px;top:463.17px;width:94.10px;height:13.96px;background:#e6e9ee;box-shadow:inset 0 -0.7px 0 rgba(90,110,140,.13)"></div>
<div class="a" style="left:478.19px;top:463.17px;width:94.10px;height:13.96px;background:#e6e9ee;box-shadow:inset 0 -0.7px 0 rgba(90,110,140,.13)"></div>
<div class="a" style="left:575.62px;top:463.17px;width:94.10px;height:13.96px;background:#e6e9ee;box-shadow:inset 0 -0.7px 0 rgba(90,110,140,.13)"></div>
<div class="a" style="left:673.05px;top:463.17px;width:94.10px;height:13.96px;background:#e6e9ee;box-shadow:inset 0 -0.7px 0 rgba(90,110,140,.13)"></div>
<div class="a" style="left:770.48px;top:463.17px;width:94.10px;height:13.96px;background:#e6e9ee;box-shadow:inset 0 -0.7px 0 rgba(90,110,140,.13)"></div>
<div class="a" style="left:867.91px;top:463.17px;width:94.10px;height:13.96px;background:#e6e9ee;box-shadow:inset 0 -0.7px 0 rgba(90,110,140,.13)"></div>
<div class="a" style="left:965.34px;top:463.17px;width:48.66px;height:13.96px;background:#e6e9ee;box-shadow:inset 0 -0.7px 0 rgba(90,110,140,.13)"></div>
<div class="a" style="left:185.90px;top:477.09px;width:94.10px;height:13.96px;background:#ffffa6"></div>
<div class="a" style="left:283.33px;top:477.09px;width:94.10px;height:13.96px;background:#ffffa6"></div>
<div class="a" style="left:380.76px;top:477.09px;width:94.10px;height:13.96px;background:#ffffa6"></div>
<div class="a" style="left:478.19px;top:477.09px;width:94.10px;height:13.96px;background:#ffffa6"></div>
<div class="a" style="left:575.62px;top:477.09px;width:94.10px;height:13.96px;background:#ffffa6"></div>
<div class="a" style="left:673.05px;top:477.09px;width:94.10px;height:13.96px;background:#ffffa6"></div>
<div class="a" style="left:770.48px;top:477.09px;width:94.10px;height:13.96px;background:#ffffa6"></div>
<div class="a" style="left:867.91px;top:477.09px;width:94.10px;height:13.96px;background:#ffffa6"></div>
<div class="a" style="left:965.34px;top:477.09px;width:48.66px;height:13.96px;background:#ffffa6"></div>
<div class="a" style="left:4.0px;top:490.40px;width:178.2px;height:0.6px;background:#f1f1f1"></div>
<div class="a" style="left:185.90px;top:491.00px;width:94.10px;height:13.96px;background:#ffffa6"></div>
<div class="a" style="left:283.33px;top:491.00px;width:94.10px;height:13.96px;background:#ffffa6"></div>
<div class="a" style="left:380.76px;top:491.00px;width:94.10px;height:13.96px;background:#ffffa6"></div>
<div class="a" style="left:478.19px;top:491.00px;width:94.10px;height:13.96px;background:#ffffa6"></div>
<div class="a" style="left:575.62px;top:491.00px;width:94.10px;height:13.96px;background:#ffffa6"></div>
<div class="a" style="left:673.05px;top:491.00px;width:94.10px;height:13.96px;background:#ffffa6"></div>
<div class="a" style="left:770.48px;top:491.00px;width:94.10px;height:13.96px;background:#ffffa6"></div>
<div class="a" style="left:867.91px;top:491.00px;width:94.10px;height:13.96px;background:#ffffa6"></div>
<div class="a" style="left:965.34px;top:491.00px;width:48.66px;height:13.96px;background:#ffffa6"></div>
<div class="a" style="left:4.0px;top:504.31px;width:178.2px;height:0.6px;background:#f1f1f1"></div>
<div class="a" style="left:185.90px;top:504.91px;width:94.10px;height:13.96px;background:#ffffa6"></div>
<div class="a" style="left:283.33px;top:504.91px;width:94.10px;height:13.96px;background:#ffffa6"></div>
<div class="a" style="left:380.76px;top:504.91px;width:94.10px;height:13.96px;background:#ffffa6"></div>
<div class="a" style="left:478.19px;top:504.91px;width:94.10px;height:13.96px;background:#ffffa6"></div>
<div class="a" style="left:575.62px;top:504.91px;width:94.10px;height:13.96px;background:#ffffa6"></div>
<div class="a" style="left:673.05px;top:504.91px;width:94.10px;height:13.96px;background:#ffffa6"></div>
<div class="a" style="left:770.48px;top:504.91px;width:94.10px;height:13.96px;background:#ffffa6"></div>
<div class="a" style="left:867.91px;top:504.91px;width:94.10px;height:13.96px;background:#ffffa6"></div>
<div class="a" style="left:965.34px;top:504.91px;width:48.66px;height:13.96px;background:#ffffa6"></div>
<div class="a" style="left:4.0px;top:518.23px;width:178.2px;height:0.6px;background:#f1f1f1"></div>
<div class="a" style="left:4.0px;top:518.83px;width:178.2px;height:13.96px;background:#d8dee7"></div>
<div class="a" style="left:185.90px;top:518.83px;width:94.10px;height:13.96px;background:#d8dee7;box-shadow:inset 0 -0.7px 0 rgba(90,110,140,.13)"></div>
<div class="a" style="left:283.33px;top:518.83px;width:94.10px;height:13.96px;background:#d8dee7;box-shadow:inset 0 -0.7px 0 rgba(90,110,140,.13)"></div>
<div class="a" style="left:380.76px;top:518.83px;width:94.10px;height:13.96px;background:#d8dee7;box-shadow:inset 0 -0.7px 0 rgba(90,110,140,.13)"></div>
<div class="a" style="left:478.19px;top:518.83px;width:94.10px;height:13.96px;background:#d8dee7;box-shadow:inset 0 -0.7px 0 rgba(90,110,140,.13)"></div>
<div class="a" style="left:575.62px;top:518.83px;width:94.10px;height:13.96px;background:#d8dee7;box-shadow:inset 0 -0.7px 0 rgba(90,110,140,.13)"></div>
<div class="a" style="left:673.05px;top:518.83px;width:94.10px;height:13.96px;background:#d8dee7;box-shadow:inset 0 -0.7px 0 rgba(90,110,140,.13)"></div>
<div class="a" style="left:770.48px;top:518.83px;width:94.10px;height:13.96px;background:#d8dee7;box-shadow:inset 0 -0.7px 0 rgba(90,110,140,.13)"></div>
<div class="a" style="left:867.91px;top:518.83px;width:94.10px;height:13.96px;background:#d8dee7;box-shadow:inset 0 -0.7px 0 rgba(90,110,140,.13)"></div>
<div class="a" style="left:965.34px;top:518.83px;width:48.66px;height:13.96px;background:#d8dee7;box-shadow:inset 0 -0.7px 0 rgba(90,110,140,.13)"></div>
<div class="a" style="left:4.0px;top:532.74px;width:178.2px;height:13.96px;background:#e6e9ee"></div>
<div class="a" style="left:185.90px;top:532.74px;width:94.10px;height:13.96px;background:#e6e9ee;box-shadow:inset 0 -0.7px 0 rgba(90,110,140,.13)"></div>
<div class="a" style="left:283.33px;top:532.74px;width:94.10px;height:13.96px;background:#e6e9ee;box-shadow:inset 0 -0.7px 0 rgba(90,110,140,.13)"></div>
<div class="a" style="left:380.76px;top:532.74px;width:94.10px;height:13.96px;background:#e6e9ee;box-shadow:inset 0 -0.7px 0 rgba(90,110,140,.13)"></div>
<div class="a" style="left:478.19px;top:532.74px;width:94.10px;height:13.96px;background:#e6e9ee;box-shadow:inset 0 -0.7px 0 rgba(90,110,140,.13)"></div>
<div class="a" style="left:575.62px;top:532.74px;width:94.10px;height:13.96px;background:#e6e9ee;box-shadow:inset 0 -0.7px 0 rgba(90,110,140,.13)"></div>
<div class="a" style="left:673.05px;top:532.74px;width:94.10px;height:13.96px;background:#e6e9ee;box-shadow:inset 0 -0.7px 0 rgba(90,110,140,.13)"></div>
<div class="a" style="left:770.48px;top:532.74px;width:94.10px;height:13.96px;background:#e6e9ee;box-shadow:inset 0 -0.7px 0 rgba(90,110,140,.13)"></div>
<div class="a" style="left:867.91px;top:532.74px;width:94.10px;height:13.96px;background:#e6e9ee;box-shadow:inset 0 -0.7px 0 rgba(90,110,140,.13)"></div>
<div class="a" style="left:965.34px;top:532.74px;width:48.66px;height:13.96px;background:#e6e9ee;box-shadow:inset 0 -0.7px 0 rgba(90,110,140,.13)"></div>
<div class="a" style="left:185.90px;top:546.65px;width:94.10px;height:13.96px;background:#ffffa6"></div>
<div class="a" style="left:283.33px;top:546.65px;width:94.10px;height:13.96px;background:#ffffa6"></div>
<div class="a" style="left:380.76px;top:546.65px;width:94.10px;height:13.96px;background:#ffffa6"></div>
<div class="a" style="left:478.19px;top:546.65px;width:94.10px;height:13.96px;background:#ffffa6"></div>
<div class="a" style="left:575.62px;top:546.65px;width:94.10px;height:13.96px;background:#ffffa6"></div>
<div class="a" style="left:673.05px;top:546.65px;width:94.10px;height:13.96px;background:#ffffa6"></div>
<div class="a" style="left:770.48px;top:546.65px;width:94.10px;height:13.96px;background:#ffffa6"></div>
<div class="a" style="left:867.91px;top:546.65px;width:94.10px;height:13.96px;background:#ffffa6"></div>
<div class="a" style="left:965.34px;top:546.65px;width:48.66px;height:13.96px;background:#ffffa6"></div>
<div class="a" style="left:4.0px;top:559.96px;width:178.2px;height:0.6px;background:#f1f1f1"></div>
<div class="a" style="left:185.90px;top:560.56px;width:94.10px;height:13.96px;background:#ffffa6"></div>
<div class="a" style="left:283.33px;top:560.56px;width:94.10px;height:13.96px;background:#ffffa6"></div>
<div class="a" style="left:380.76px;top:560.56px;width:94.10px;height:13.96px;background:#ffffa6"></div>
<div class="a" style="left:478.19px;top:560.56px;width:94.10px;height:13.96px;background:#ffffa6"></div>
<div class="a" style="left:575.62px;top:560.56px;width:94.10px;height:13.96px;background:#ffffa6"></div>
<div class="a" style="left:673.05px;top:560.56px;width:94.10px;height:13.96px;background:#ffffa6"></div>
<div class="a" style="left:770.48px;top:560.56px;width:94.10px;height:13.96px;background:#ffffa6"></div>
<div class="a" style="left:867.91px;top:560.56px;width:94.10px;height:13.96px;background:#ffffa6"></div>
<div class="a" style="left:965.34px;top:560.56px;width:48.66px;height:13.96px;background:#ffffa6"></div>
<div class="a" style="left:4.0px;top:573.88px;width:178.2px;height:0.6px;background:#f1f1f1"></div>
<div class="a" style="left:4.0px;top:574.48px;width:178.2px;height:13.96px;background:#e6e9ee"></div>
<div class="a" style="left:185.90px;top:574.48px;width:94.10px;height:13.96px;background:#e6e9ee;box-shadow:inset 0 -0.7px 0 rgba(90,110,140,.13)"></div>
<div class="a" style="left:283.33px;top:574.48px;width:94.10px;height:13.96px;background:#e6e9ee;box-shadow:inset 0 -0.7px 0 rgba(90,110,140,.13)"></div>
<div class="a" style="left:380.76px;top:574.48px;width:94.10px;height:13.96px;background:#e6e9ee;box-shadow:inset 0 -0.7px 0 rgba(90,110,140,.13)"></div>
<div class="a" style="left:478.19px;top:574.48px;width:94.10px;height:13.96px;background:#e6e9ee;box-shadow:inset 0 -0.7px 0 rgba(90,110,140,.13)"></div>
<div class="a" style="left:575.62px;top:574.48px;width:94.10px;height:13.96px;background:#e6e9ee;box-shadow:inset 0 -0.7px 0 rgba(90,110,140,.13)"></div>
<div class="a" style="left:673.05px;top:574.48px;width:94.10px;height:13.96px;background:#e6e9ee;box-shadow:inset 0 -0.7px 0 rgba(90,110,140,.13)"></div>
<div class="a" style="left:770.48px;top:574.48px;width:94.10px;height:13.96px;background:#e6e9ee;box-shadow:inset 0 -0.7px 0 rgba(90,110,140,.13)"></div>
<div class="a" style="left:867.91px;top:574.48px;width:94.10px;height:13.96px;background:#e6e9ee;box-shadow:inset 0 -0.7px 0 rgba(90,110,140,.13)"></div>
<div class="a" style="left:965.34px;top:574.48px;width:48.66px;height:13.96px;background:#e6e9ee;box-shadow:inset 0 -0.7px 0 rgba(90,110,140,.13)"></div>
<div class="a" style="left:185.90px;top:588.39px;width:94.10px;height:13.96px;background:#ffffa6"></div>
<div class="a" style="left:283.33px;top:588.39px;width:94.10px;height:13.96px;background:#ffffa6"></div>
<div class="a" style="left:380.76px;top:588.39px;width:94.10px;height:13.96px;background:#ffffa6"></div>
<div class="a" style="left:478.19px;top:588.39px;width:94.10px;height:13.96px;background:#ffffa6"></div>
<div class="a" style="left:575.62px;top:588.39px;width:94.10px;height:13.96px;background:#ffffa6"></div>
<div class="a" style="left:673.05px;top:588.39px;width:94.10px;height:13.96px;background:#ffffa6"></div>
<div class="a" style="left:770.48px;top:588.39px;width:94.10px;height:13.96px;background:#ffffa6"></div>
<div class="a" style="left:867.91px;top:588.39px;width:94.10px;height:13.96px;background:#ffffa6"></div>
<div class="a" style="left:965.34px;top:588.39px;width:48.66px;height:13.96px;background:#ffffa6"></div>
<div class="a" style="left:4.0px;top:601.70px;width:178.2px;height:0.6px;background:#f1f1f1"></div>
<div class="a" style="left:185.90px;top:602.30px;width:94.10px;height:13.96px;background:#ffffa6"></div>
<div class="a" style="left:283.33px;top:602.30px;width:94.10px;height:13.96px;background:#ffffa6"></div>
<div class="a" style="left:380.76px;top:602.30px;width:94.10px;height:13.96px;background:#ffffa6"></div>
<div class="a" style="left:478.19px;top:602.30px;width:94.10px;height:13.96px;background:#ffffa6"></div>
<div class="a" style="left:575.62px;top:602.30px;width:94.10px;height:13.96px;background:#ffffa6"></div>
<div class="a" style="left:673.05px;top:602.30px;width:94.10px;height:13.96px;background:#ffffa6"></div>
<div class="a" style="left:770.48px;top:602.30px;width:94.10px;height:13.96px;background:#ffffa6"></div>
<div class="a" style="left:867.91px;top:602.30px;width:94.10px;height:13.96px;background:#ffffa6"></div>
<div class="a" style="left:965.34px;top:602.30px;width:48.66px;height:13.96px;background:#ffffa6"></div>
<div class="a" style="left:4.0px;top:615.62px;width:178.2px;height:0.6px;background:#f1f1f1"></div>
<div class="a" style="left:185.90px;top:616.22px;width:94.10px;height:23.78px;background:#ffffa6"></div>
<div class="a" style="left:283.33px;top:616.22px;width:94.10px;height:23.78px;background:#ffffa6"></div>
<div class="a" style="left:380.76px;top:616.22px;width:94.10px;height:23.78px;background:#ffffa6"></div>
<div class="a" style="left:478.19px;top:616.22px;width:94.10px;height:23.78px;background:#ffffa6"></div>
<div class="a" style="left:575.62px;top:616.22px;width:94.10px;height:23.78px;background:#ffffa6"></div>
<div class="a" style="left:673.05px;top:616.22px;width:94.10px;height:23.78px;background:#ffffa6"></div>
<div class="a" style="left:770.48px;top:616.22px;width:94.10px;height:23.78px;background:#ffffa6"></div>
<div class="a" style="left:867.91px;top:616.22px;width:94.10px;height:23.78px;background:#ffffa6"></div>
<div class="a" style="left:965.34px;top:616.22px;width:48.66px;height:23.78px;background:#ffffa6"></div>
</div><div id="text" class="layer" style="will-change:transform">
<div class="r" style="top:174px;transform:translateY(0.20px) rotate(.0001deg)">
<span class="l lb" style="left:6.7px;top:0">Total</span>
<span class="n nb" style="left:169.35px;top:0">27,000</span>
<span class="n nb" style="left:214.75px;top:0">27,000</span>
<span class="n nb" style="left:266.78px;top:0">27,000</span>
<span class="n nb" style="left:312.18px;top:0">27,000</span>
<span class="n nb" style="left:364.21px;top:0">177,000</span>
<span class="n nb" style="left:409.61px;top:0">35,000</span>
<span class="n nb" style="left:461.64px;top:0">79,500</span>
<span class="n nb" style="left:507.04px;top:0">33,500</span>
<span class="n nb" style="left:559.07px;top:0">77,000</span>
<span class="n nb" style="left:604.47px;top:0">33,500</span>
<span class="n nb" style="left:656.50px;top:0">527,000</span>
<span class="n nb" style="left:701.90px;top:0">28,500</span>
<span class="n nb" style="left:753.93px;top:0">27,000</span>
<span class="n nb" style="left:799.33px;top:0">1,228,500</span>
<span class="n nb" style="left:851.36px;top:0">27,000</span>
<span class="n nb" style="left:896.76px;top:0">28,500</span>
<span class="n nb" style="left:948.79px;top:0">27,000</span>
</div>
<div class="r" style="top:188px;transform:translateY(0.11px) rotate(.0001deg)">
<span class="l lb" style="left:15.3px;top:0">Site Labor</span>
<span class="n nb" style="left:169.35px;top:0">27,000</span>
<span class="n nb" style="left:214.75px;top:0">27,000</span>
<span class="n nb" style="left:266.78px;top:0">27,000</span>
<span class="n nb" style="left:312.18px;top:0">27,000</span>
<span class="n nb" style="left:364.21px;top:0">27,000</span>
<span class="n nb" style="left:409.61px;top:0">27,000</span>
<span class="n nb" style="left:461.64px;top:0">27,000</span>
<span class="n nb" style="left:507.04px;top:0">27,000</span>
<span class="n nb" style="left:559.07px;top:0">27,000</span>
<span class="n nb" style="left:604.47px;top:0">27,000</span>
<span class="n nb" style="left:656.50px;top:0">27,000</span>
<span class="n nb" style="left:701.90px;top:0">27,000</span>
<span class="n nb" style="left:753.93px;top:0">27,000</span>
<span class="n nb" style="left:799.33px;top:0">27,000</span>
<span class="n nb" style="left:851.36px;top:0">27,000</span>
<span class="n nb" style="left:896.76px;top:0">27,000</span>
<span class="n nb" style="left:948.79px;top:0">27,000</span>
</div>
<div class="r" style="top:202px;transform:translateY(0.03px) rotate(.0001deg)">
<span class="l lb" style="left:23.9px;top:0">Labor</span>
<span class="n nb" style="left:169.35px;top:0">27,000</span>
<span class="n nb" style="left:214.75px;top:0">27,000</span>
<span class="n nb" style="left:266.78px;top:0">27,000</span>
<span class="n nb" style="left:312.18px;top:0">27,000</span>
<span class="n nb" style="left:364.21px;top:0">27,000</span>
<span class="n nb" style="left:409.61px;top:0">27,000</span>
<span class="n nb" style="left:461.64px;top:0">27,000</span>
<span class="n nb" style="left:507.04px;top:0">27,000</span>
<span class="n nb" style="left:559.07px;top:0">27,000</span>
<span class="n nb" style="left:604.47px;top:0">27,000</span>
<span class="n nb" style="left:656.50px;top:0">27,000</span>
<span class="n nb" style="left:701.90px;top:0">27,000</span>
<span class="n nb" style="left:753.93px;top:0">27,000</span>
<span class="n nb" style="left:799.33px;top:0">27,000</span>
<span class="n nb" style="left:851.36px;top:0">27,000</span>
<span class="n nb" style="left:896.76px;top:0">27,000</span>
<span class="n nb" style="left:948.79px;top:0">27,000</span>
</div>
<div class="r" style="top:215px;transform:translateY(0.94px) rotate(.0001deg)">
<span class="l" style="left:32.5px;top:0">Engineering</span>
<span class="n" style="left:169.35px;top:0">10,000</span>
<span class="n" style="left:214.75px;top:0">10,000</span>
<span class="n" style="left:266.78px;top:0">10,000</span>
<span class="n" style="left:312.18px;top:0">10,000</span>
<span class="n" style="left:364.21px;top:0">10,000</span>
<span class="n" style="left:409.61px;top:0">10,000</span>
<span class="n" style="left:461.64px;top:0">10,000</span>
<span class="n" style="left:507.04px;top:0">10,000</span>
<span class="n" style="left:559.07px;top:0">10,000</span>
<span class="n" style="left:604.47px;top:0">10,000</span>
<span class="n" style="left:656.50px;top:0">10,000</span>
<span class="n" style="left:701.90px;top:0">10,000</span>
<span class="n" style="left:753.93px;top:0">10,000</span>
<span class="n" style="left:799.33px;top:0">10,000</span>
<span class="n" style="left:851.36px;top:0">10,000</span>
<span class="n" style="left:896.76px;top:0">10,000</span>
<span class="n" style="left:948.79px;top:0">10,000</span>
</div>
<div class="r" style="top:229px;transform:translateY(0.85px) rotate(.0001deg)">
<span class="l" style="left:32.5px;top:0">Maintenance</span>
<span class="n" style="left:169.35px;top:0">15,000</span>
<span class="n" style="left:214.75px;top:0">15,000</span>
<span class="n" style="left:266.78px;top:0">15,000</span>
<span class="n" style="left:312.18px;top:0">15,000</span>
<span class="n" style="left:364.21px;top:0">15,000</span>
<span class="n" style="left:409.61px;top:0">15,000</span>
<span class="n" style="left:461.64px;top:0">15,000</span>
<span class="n" style="left:507.04px;top:0">15,000</span>
<span class="n" style="left:559.07px;top:0">15,000</span>
<span class="n" style="left:604.47px;top:0">15,000</span>
<span class="n" style="left:656.50px;top:0">15,000</span>
<span class="n" style="left:701.90px;top:0">15,000</span>
<span class="n" style="left:753.93px;top:0">15,000</span>
<span class="n" style="left:799.33px;top:0">15,000</span>
<span class="n" style="left:851.36px;top:0">15,000</span>
<span class="n" style="left:896.76px;top:0">15,000</span>
<span class="n" style="left:948.79px;top:0">15,000</span>
</div>
<div class="r" style="top:243px;transform:translateY(0.76px) rotate(.0001deg)">
<span class="l" style="left:32.5px;top:0">Other</span>
</div>
<div class="r" style="top:257px;transform:translateY(0.68px) rotate(.0001deg)">
<span class="l" style="left:32.5px;top:0">Project Management</span>
<span class="n" style="left:169.35px;top:0">2,000</span>
<span class="n" style="left:214.75px;top:0">2,000</span>
<span class="n" style="left:266.78px;top:0">2,000</span>
<span class="n" style="left:312.18px;top:0">2,000</span>
<span class="n" style="left:364.21px;top:0">2,000</span>
<span class="n" style="left:409.61px;top:0">2,000</span>
<span class="n" style="left:461.64px;top:0">2,000</span>
<span class="n" style="left:507.04px;top:0">2,000</span>
<span class="n" style="left:559.07px;top:0">2,000</span>
<span class="n" style="left:604.47px;top:0">2,000</span>
<span class="n" style="left:656.50px;top:0">2,000</span>
<span class="n" style="left:701.90px;top:0">2,000</span>
<span class="n" style="left:753.93px;top:0">2,000</span>
<span class="n" style="left:799.33px;top:0">2,000</span>
<span class="n" style="left:851.36px;top:0">2,000</span>
<span class="n" style="left:896.76px;top:0">2,000</span>
<span class="n" style="left:948.79px;top:0">2,000</span>
</div>
<div class="r" style="top:271px;transform:translateY(0.59px) rotate(.0001deg)">
<span class="l lb" style="left:15.3px;top:0">Materials</span>
<span class="n nb" style="left:364.21px;top:0">150,000</span>
<span class="n nb" style="left:409.61px;top:0">1,500</span>
<span class="n nb" style="left:461.64px;top:0">52,500</span>
<span class="n nb" style="left:559.07px;top:0">50,000</span>
<span class="n nb" style="left:656.50px;top:0">500,000</span>
<span class="n nb" style="left:799.33px;top:0">1,200,000</span>
</div>
<div class="r" style="top:285px;transform:translateY(0.50px) rotate(.0001deg)">
<span class="l lb" style="left:23.9px;top:0">Materials</span>
<span class="n nb" style="left:364.21px;top:0">150,000</span>
<span class="n nb" style="left:409.61px;top:0">1,500</span>
<span class="n nb" style="left:461.64px;top:0">52,500</span>
<span class="n nb" style="left:559.07px;top:0">50,000</span>
<span class="n nb" style="left:656.50px;top:0">500,000</span>
<span class="n nb" style="left:799.33px;top:0">1,200,000</span>
</div>
<div class="r" style="top:299px;transform:translateY(0.42px) rotate(.0001deg)">
<span class="l" style="left:32.5px;top:0">Acme Pipe Fittings</span>
<span class="n" style="left:364.21px;top:0">150,000</span>
<span class="n" style="left:409.61px;top:0">1,500</span>
<span class="n" style="left:461.64px;top:0">2,500</span>
</div>
<div class="r" style="top:313px;transform:translateY(0.33px) rotate(.0001deg)">
<span class="l" style="left:32.5px;top:0">Other</span>
</div>
<div class="r" style="top:327px;transform:translateY(0.24px) rotate(.0001deg)">
<span class="l" style="left:32.5px;top:0">SCS Piping</span>
<span class="n" style="left:461.64px;top:0">50,000</span>
<span class="n" style="left:559.07px;top:0">50,000</span>
<span class="n" style="left:656.50px;top:0">500,000</span>
<span class="n" style="left:799.33px;top:0">1,200,000</span>
</div>
<div class="r" style="top:341px;transform:translateY(0.16px) rotate(.0001deg)">
<span class="l lb" style="left:15.3px;top:0">Contract</span>
<span class="n nb" style="left:409.61px;top:0">6,500</span>
<span class="n nb" style="left:507.04px;top:0">6,500</span>
<span class="n nb" style="left:604.47px;top:0">6,500</span>
<span class="n nb" style="left:701.90px;top:0">1,500</span>
<span class="n nb" style="left:799.33px;top:0">1,500</span>
<span class="n nb" style="left:896.76px;top:0">1,500</span>
</div>
<div class="r" style="top:355px;transform:translateY(0.07px) rotate(.0001deg)">
<span class="l lb" style="left:23.9px;top:0">Engineering</span>
<span class="n nb" style="left:409.61px;top:0">6,500</span>
<span class="n nb" style="left:507.04px;top:0">6,500</span>
<span class="n nb" style="left:604.47px;top:0">6,500</span>
<span class="n nb" style="left:701.90px;top:0">1,500</span>
<span class="n nb" style="left:799.33px;top:0">1,500</span>
<span class="n nb" style="left:896.76px;top:0">1,500</span>
</div>
<div class="r" style="top:368px;transform:translateY(0.98px) rotate(.0001deg)">
<span class="l" style="left:32.5px;top:0">American Engineering Corp</span>
<span class="n" style="left:409.61px;top:0">1,500</span>
<span class="n" style="left:507.04px;top:0">1,500</span>
<span class="n" style="left:604.47px;top:0">1,500</span>
<span class="n" style="left:701.90px;top:0">1,500</span>
<span class="n" style="left:799.33px;top:0">1,500</span>
<span class="n" style="left:896.76px;top:0">1,500</span>
</div>
<div class="r" style="top:382px;transform:translateY(0.89px) rotate(.0001deg)">
<span class="l" style="left:32.5px;top:0">Other</span>
<span class="n" style="left:409.61px;top:0">5,000</span>
<span class="n" style="left:507.04px;top:0">5,000</span>
<span class="n" style="left:604.47px;top:0">5,000</span>
</div>
<div class="r" style="top:396px;transform:translateY(0.81px) rotate(.0001deg)">
<span class="l lb" style="left:23.9px;top:0">Installation</span>
</div>
<div class="r" style="top:410px;transform:translateY(0.72px) rotate(.0001deg)">
<span class="l" style="left:32.5px;top:0">CAT Rentals</span>
</div>
<div class="r" style="top:424px;transform:translateY(0.63px) rotate(.0001deg)">
<span class="l" style="left:32.5px;top:0">Day &amp; Zimmerman</span>
</div>
<div class="r" style="top:438px;transform:translateY(0.55px) rotate(.0001deg)">
<span class="l" style="left:32.5px;top:0">Mud Bros Dirt &amp; Dumpster</span>
</div>
<div class="r" style="top:452px;transform:translateY(0.46px) rotate(.0001deg)">
<span class="l" style="left:32.5px;top:0">Other</span>
</div>
<div class="r" style="top:466px;transform:translateY(0.37px) rotate(.0001deg)">
<span class="l lb" style="left:23.9px;top:0">Staff</span>
</div>
<div class="r" style="top:480px;transform:translateY(0.29px) rotate(.0001deg)">
<span class="l" style="left:32.5px;top:0">Engineering Aug - Smith</span>
</div>
<div class="r" style="top:494px;transform:translateY(0.20px) rotate(.0001deg)">
<span class="l" style="left:32.5px;top:0">Other</span>
</div>
<div class="r" style="top:508px;transform:translateY(0.11px) rotate(.0001deg)">
<span class="l" style="left:32.5px;top:0">Project Management Aug - Garcia</span>
</div>
<div class="r" style="top:522px;transform:translateY(0.03px) rotate(.0001deg)">
<span class="l lb" style="left:15.3px;top:0">Other</span>
</div>
<div class="r" style="top:535px;transform:translateY(0.94px) rotate(.0001deg)">
<span class="l lb" style="left:23.9px;top:0">Other</span>
</div>
<div class="r" style="top:549px;transform:translateY(0.85px) rotate(.0001deg)">
<span class="l" style="left:32.5px;top:0">Misc Expenses</span>
</div>
<div class="r" style="top:563px;transform:translateY(0.76px) rotate(.0001deg)">
<span class="l" style="left:32.5px;top:0">Other</span>
</div>
<div class="r" style="top:577px;transform:translateY(0.68px) rotate(.0001deg)">
<span class="l lb" style="left:23.9px;top:0">Travel</span>
</div>
<div class="r" style="top:591px;transform:translateY(0.59px) rotate(.0001deg)">
<span class="l" style="left:32.5px;top:0">Other</span>
</div>
<div class="r" style="top:605px;transform:translateY(0.50px) rotate(.0001deg)">
<span class="l" style="left:32.5px;top:0">Travel Expenses</span>
</div>
<div class="w" style="left:258px;top:10px;transform:translate(0.20px,0.40px) rotate(.0001deg)"><span class="t" style="font-size:8.9px;line-height:10px;color:#f2f2f2;transform:scaleX(0.9918);transform-origin:0 50%;">Dashboard</span></div>
<div class="w" style="left:330px;top:10px;transform:translate(0.90px,0.40px) rotate(.0001deg)"><span class="t" style="font-size:8.9px;line-height:10px;color:#f2f2f2;transform:scaleX(0.9422);transform-origin:0 50%;">LCM</span></div>
<div class="w" style="left:385px;top:10px;transform:translate(0.00px,0.40px) rotate(.0001deg)"><span class="t" style="font-size:8.9px;line-height:10px;color:#f2f2f2;transform:scaleX(1.0026);transform-origin:0 50%;">Committees</span></div>
<div class="w" style="left:469px;top:10px;transform:translate(0.10px,0.40px) rotate(.0001deg)"><span class="t" style="font-size:8.9px;line-height:10px;color:#f2f2f2;transform:scaleX(0.9783);transform-origin:0 50%;">Projects</span></div>
<div class="w" style="left:536px;top:10px;transform:translate(0.90px,0.40px) rotate(.0001deg)"><span class="t" style="font-size:8.9px;line-height:10px;color:#f2f2f2;transform:scaleX(1.0130);transform-origin:0 50%;">Overtime</span></div>
<div class="w" style="left:609px;top:10px;transform:translate(0.80px,0.40px) rotate(.0001deg)"><span class="t" style="font-size:8.9px;line-height:10px;color:#f2f2f2;transform:scaleX(0.9975);transform-origin:0 50%;">Inbox (48)</span></div>
<div class="w" style="left:678px;top:10px;transform:translate(0.90px,0.40px) rotate(.0001deg)"><span class="t" style="font-size:8.9px;line-height:10px;color:#f2f2f2;transform:scaleX(1.0199);transform-origin:0 50%;">Config</span></div>
<div class="w" style="left:124px;top:9px;transform:translate(0.30px,0.90px) rotate(.0001deg)"><span class="t" style="font-size:12.6px;line-height:14px;color:#c09853;transform:scaleX(0.9198);transform-origin:0 50%;">NUCLEAR-DEMO</span></div>
<div class="w" style="left:21px;top:8px;transform:translate(0.50px,0.20px) rotate(.0001deg)"><span class="t" style="font-size:10.6px;line-height:12px;color:#f0f0f0;letter-spacing:1.15px;transform:scaleX(1.17);transform-origin:0 0;">NGAGE</span></div>
<div class="w" style="left:58px;top:18px;transform:translate(0.60px,0.80px) rotate(.0001deg)"><span class="t" style="font-size:5.8px;line-height:6px;color:#e4e4e4;font-weight:700;transform:scaleX(1.0566);transform-origin:0 50%;">LCM</span></div>
<div class="w" style="left:13px;top:39px;transform:translate(0.50px,0.80px) rotate(.0001deg)"><span class="t" style="font-size:15.8px;line-height:17px;color:#2b2b2b;font-weight:700;transform:scaleX(1.0423);transform-origin:0 50%;">Buried Pipe Life Cycle Management</span></div>
<div class="w" style="left:313px;top:42px;transform:translate(0.30px,0.50px) rotate(.0001deg)"><span class="t" style="font-size:12.3px;line-height:14px;color:#3b7dd8;transform:scaleX(0.9785);transform-origin:0 50%;">Return to Search</span></div>
<div class="w" style="left:13px;top:61px;transform:translate(0.80px,0.70px) rotate(.0001deg)"><span class="t" style="font-size:12.4px;line-height:14px;color:#3b7dd8;">WIL-20-0038</span></div>
<div class="w" style="left:88px;top:61px;transform:translate(0.90px,0.70px) rotate(.0001deg)"><span class="t" style="font-size:12.4px;line-height:14px;color:#777;transform:scaleX(0.8750);transform-origin:0 50%;">| C.BDPIPE |</span></div>
<div class="w" style="left:155px;top:61px;transform:translate(0.30px,0.70px) rotate(.0001deg)"><span class="t" style="font-size:12.4px;line-height:14px;color:#777;transform:scaleX(0.9942);transform-origin:0 50%;">Wilmington (74.86%) |</span></div>
<div class="w" style="left:281px;top:61px;transform:translate(0.10px,0.70px) rotate(.0001deg)"><span class="t" style="font-size:12.4px;line-height:14px;color:#777;transform:scaleX(0.9933);transform-origin:0 50%;">Project Managed |</span></div>
<div class="w" style="left:385px;top:61px;transform:translate(0.10px,0.70px) rotate(.0001deg)"><span class="t" style="font-size:12.4px;line-height:14px;color:#777;transform:scaleX(0.9721);transform-origin:0 50%;">Capital |</span></div>
<div class="w" style="left:433px;top:61px;transform:translate(0.20px,0.70px) rotate(.0001deg)"><span class="t" style="font-size:12.4px;line-height:14px;color:#777;">Submitted For (Aug '20)</span></div>
<div class="w" style="left:719px;top:38px;transform:translate(0.00px,0.50px) rotate(.0001deg)"><span class="t" style="font-size:8.9px;line-height:10px;color:#4a6fa5;transform:scaleX(0.9820);transform-origin:0 50%;">Current Year Forecast</span></div>
<div class="w" style="left:814px;top:38px;transform:translate(0.90px,0.50px) rotate(.0001deg)"><span class="t" style="font-size:8.9px;line-height:10px;color:#4a6fa5;transform:scaleX(1.0154);transform-origin:0 50%;">Estimate at Completion</span></div>
<div class="w" style="left:920px;top:38px;transform:translate(0.60px,0.50px) rotate(.0001deg)"><span class="t" style="font-size:8.9px;line-height:10px;color:#4a6fa5;transform:scaleX(0.9789);transform-origin:0 50%;">End Variance to Bud.</span></div>
<div class="w" style="left:733px;top:54px;transform:translate(0.70px,0.10px) rotate(.0001deg)"><span class="t" style="font-size:12.2px;line-height:14px;color:#2b2b2b;font-weight:700;transform:scaleX(1.0955);transform-origin:0 50%;">$7.17MM</span></div>
<div class="w" style="left:829px;top:54px;transform:translate(0.60px,0.10px) rotate(.0001deg)"><span class="t" style="font-size:12.2px;line-height:14px;color:#2b2b2b;font-weight:700;transform:scaleX(1.0967);transform-origin:0 50%;">$34.59MM</span></div>
<div class="w" style="left:925px;top:54px;transform:translate(0.30px,0.10px) rotate(.0001deg)"><span class="t" style="font-size:12.2px;line-height:14px;color:#2b2b2b;font-weight:700;transform:scaleX(1.0984);transform-origin:0 50%;">($22.59MM)</span></div>
<div class="w" style="left:22px;top:84px;transform:translate(0.70px,0.50px) rotate(.0001deg)"><span class="t" style="font-size:8.9px;line-height:10px;color:#555;transform:scaleX(0.9939);transform-origin:0 50%;">Project Overview</span></div>
<div class="w" style="left:107px;top:84px;transform:translate(0.50px,0.50px) rotate(.0001deg)"><span class="t" style="font-size:8.9px;line-height:10px;color:#2f7fd1;font-weight:700;transform:scaleX(0.9851);transform-origin:0 50%;">Cashflow</span></div>
<div class="w" style="left:164px;top:84px;transform:translate(0.70px,0.50px) rotate(.0001deg)"><span class="t" style="font-size:8.9px;line-height:10px;color:#555;transform:scaleX(0.9168);transform-origin:0 50%;">PIs (9)</span></div>
<div class="w" style="left:206px;top:84px;transform:translate(0.60px,0.50px) rotate(.0001deg)"><span class="t" style="font-size:8.9px;line-height:10px;color:#555;transform:scaleX(0.9975);transform-origin:0 50%;">R&amp;O (2)</span></div>
<div class="w" style="left:257px;top:84px;transform:translate(0.00px,0.50px) rotate(.0001deg)"><span class="t" style="font-size:8.9px;line-height:10px;color:#555;transform:scaleX(0.9277);transform-origin:0 50%;">POs (2)</span></div>
<div class="w" style="left:303px;top:84px;transform:translate(0.40px,0.50px) rotate(.0001deg)"><span class="t" style="font-size:8.9px;line-height:10px;color:#555;transform:scaleX(0.9803);transform-origin:0 50%;">In-Service Dates (2)</span></div>
<div class="w" style="left:398px;top:84px;transform:translate(0.70px,0.50px) rotate(.0001deg)"><span class="t" style="font-size:8.9px;line-height:10px;color:#555;transform:scaleX(0.9843);transform-origin:0 50%;">R&amp;C / Change Requests (9)</span></div>
<div class="w" style="left:525px;top:84px;transform:translate(0.50px,0.50px) rotate(.0001deg)"><span class="t" style="font-size:8.9px;line-height:10px;color:#555;transform:scaleX(1.0018);transform-origin:0 50%;">Attachments (1)</span></div>
<div class="w" style="left:606px;top:84px;transform:translate(0.50px,0.50px) rotate(.0001deg)"><span class="t" style="font-size:8.9px;line-height:10px;color:#555;transform:scaleX(1.0164);transform-origin:0 50%;">Project Manager History</span></div>
<div class="w" style="left:896px;top:84px;transform:translate(0.50px,0.50px) rotate(.0001deg)"><span class="t" style="font-size:8.9px;line-height:10px;color:#fff;transform:scaleX(0.9176);transform-origin:0 50%;">Save</span></div>
<div class="w" style="left:933px;top:84px;transform:translate(0.80px,0.50px) rotate(.0001deg)"><span class="t" style="font-size:8.9px;line-height:10px;color:#333;transform:scaleX(0.9431);transform-origin:0 50%;">Cancel</span></div>
<div class="w" style="left:9px;top:118px;transform:translate(0.80px,0.10px) rotate(.0001deg)"><span class="t" style="font-size:11.8px;line-height:14px;color:#555;transform:scaleX(0.9441);transform-origin:0 50%;">-All Categories-</span></div>
<div class="w" style="left:117px;top:119px;transform:translate(0.20px,0.10px) rotate(.0001deg)"><span class="t" style="font-size:8.9px;line-height:10px;color:#333;transform:scaleX(0.9353);transform-origin:0 50%;">Jan 2021</span></div>
<div class="w" style="left:186px;top:119px;transform:translate(0.10px,0.10px) rotate(.0001deg)"><span class="t" style="font-size:8.9px;line-height:10px;color:#333;transform:scaleX(0.9702);transform-origin:0 50%;">Dec 2022</span></div>
<div class="w" style="left:250px;top:119px;transform:translate(0.00px,1.00px) rotate(.0001deg)"><span class="t" style="font-size:9.2px;line-height:10px;color:#999;transform:scaleX(0.8829);transform-origin:0 50%;">Search...</span></div>
<div class="w" style="left:7px;top:160px;transform:translate(0.40px,0.20px) rotate(.0001deg)"><span class="t" style="font-size:7.65px;line-height:9px;color:#555;font-style:italic;transform:scaleX(0.9898);transform-origin:0 50%;">All values in Whole Dollars</span></div>
<div class="w" style="left:232px;top:148px;transform:translate(calc(-50% + 0.35px),0.40px) rotate(.0001deg)"><span class="t" style="font-size:7.65px;line-height:9px;color:#3a3a3a;letter-spacing:-0.25px;">Jan 21</span></div>
<div class="w" style="left:196px;top:160px;transform:translate(0.30px,0.60px) rotate(.0001deg)"><span class="t" style="font-size:7.65px;line-height:9px;color:#3a3a3a;transform:scaleX(0.9393);transform-origin:0 50%;">Forecast</span></div>
<div class="w" style="left:235px;top:160px;transform:translate(0.00px,0.60px) rotate(.0001deg)"><span class="t" style="font-size:7.65px;line-height:9px;color:#3a3a3a;transform:scaleX(0.9253);transform-origin:0 50%;">PRC Auth. (...</span></div>
<div class="w" style="left:329px;top:148px;transform:translate(calc(-50% + 0.78px),0.40px) rotate(.0001deg)"><span class="t" style="font-size:7.65px;line-height:9px;color:#3a3a3a;letter-spacing:-0.25px;">Feb 21</span></div>
<div class="w" style="left:293px;top:160px;transform:translate(0.73px,0.60px) rotate(.0001deg)"><span class="t" style="font-size:7.65px;line-height:9px;color:#3a3a3a;transform:scaleX(0.9393);transform-origin:0 50%;">Forecast</span></div>
<div class="w" style="left:332px;top:160px;transform:translate(0.43px,0.60px) rotate(.0001deg)"><span class="t" style="font-size:7.65px;line-height:9px;color:#3a3a3a;transform:scaleX(0.9253);transform-origin:0 50%;">PRC Auth. (...</span></div>
<div class="w" style="left:427px;top:148px;transform:translate(calc(-50% + 0.21px),0.40px) rotate(.0001deg)"><span class="t" style="font-size:7.65px;line-height:9px;color:#3a3a3a;letter-spacing:-0.25px;">Mar 21</span></div>
<div class="w" style="left:391px;top:160px;transform:translate(0.16px,0.60px) rotate(.0001deg)"><span class="t" style="font-size:7.65px;line-height:9px;color:#3a3a3a;transform:scaleX(0.9393);transform-origin:0 50%;">Forecast</span></div>
<div class="w" style="left:429px;top:160px;transform:translate(0.86px,0.60px) rotate(.0001deg)"><span class="t" style="font-size:7.65px;line-height:9px;color:#3a3a3a;transform:scaleX(0.9253);transform-origin:0 50%;">PRC Auth. (...</span></div>
<div class="w" style="left:524px;top:148px;transform:translate(calc(-50% + 0.64px),0.40px) rotate(.0001deg)"><span class="t" style="font-size:7.65px;line-height:9px;color:#3a3a3a;letter-spacing:-0.25px;">Apr 21</span></div>
<div class="w" style="left:488px;top:160px;transform:translate(0.59px,0.60px) rotate(.0001deg)"><span class="t" style="font-size:7.65px;line-height:9px;color:#3a3a3a;transform:scaleX(0.9393);transform-origin:0 50%;">Forecast</span></div>
<div class="w" style="left:527px;top:160px;transform:translate(0.29px,0.60px) rotate(.0001deg)"><span class="t" style="font-size:7.65px;line-height:9px;color:#3a3a3a;transform:scaleX(0.9253);transform-origin:0 50%;">PRC Auth. (...</span></div>
<div class="w" style="left:622px;top:148px;transform:translate(calc(-50% + 0.07px),0.40px) rotate(.0001deg)"><span class="t" style="font-size:7.65px;line-height:9px;color:#3a3a3a;letter-spacing:-0.25px;">May 21</span></div>
<div class="w" style="left:586px;top:160px;transform:translate(0.02px,0.60px) rotate(.0001deg)"><span class="t" style="font-size:7.65px;line-height:9px;color:#3a3a3a;transform:scaleX(0.9393);transform-origin:0 50%;">Forecast</span></div>
<div class="w" style="left:624px;top:160px;transform:translate(0.72px,0.60px) rotate(.0001deg)"><span class="t" style="font-size:7.65px;line-height:9px;color:#3a3a3a;transform:scaleX(0.9253);transform-origin:0 50%;">PRC Auth. (...</span></div>
<div class="w" style="left:719px;top:148px;transform:translate(calc(-50% + 0.50px),0.40px) rotate(.0001deg)"><span class="t" style="font-size:7.65px;line-height:9px;color:#3a3a3a;letter-spacing:-0.25px;">Jun 21</span></div>
<div class="w" style="left:683px;top:160px;transform:translate(0.45px,0.60px) rotate(.0001deg)"><span class="t" style="font-size:7.65px;line-height:9px;color:#3a3a3a;transform:scaleX(0.9393);transform-origin:0 50%;">Forecast</span></div>
<div class="w" style="left:722px;top:160px;transform:translate(0.15px,0.60px) rotate(.0001deg)"><span class="t" style="font-size:7.65px;line-height:9px;color:#3a3a3a;transform:scaleX(0.9253);transform-origin:0 50%;">PRC Auth. (...</span></div>
<div class="w" style="left:816px;top:148px;transform:translate(calc(-50% + 0.93px),0.40px) rotate(.0001deg)"><span class="t" style="font-size:7.65px;line-height:9px;color:#3a3a3a;letter-spacing:-0.25px;">Jul 21</span></div>
<div class="w" style="left:780px;top:160px;transform:translate(0.88px,0.60px) rotate(.0001deg)"><span class="t" style="font-size:7.65px;line-height:9px;color:#3a3a3a;transform:scaleX(0.9393);transform-origin:0 50%;">Forecast</span></div>
<div class="w" style="left:819px;top:160px;transform:translate(0.58px,0.60px) rotate(.0001deg)"><span class="t" style="font-size:7.65px;line-height:9px;color:#3a3a3a;transform:scaleX(0.9253);transform-origin:0 50%;">PRC Auth. (...</span></div>
<div class="w" style="left:914px;top:148px;transform:translate(calc(-50% + 0.36px),0.40px) rotate(.0001deg)"><span class="t" style="font-size:7.65px;line-height:9px;color:#3a3a3a;letter-spacing:-0.25px;">Aug 21</span></div>
<div class="w" style="left:878px;top:160px;transform:translate(0.31px,0.60px) rotate(.0001deg)"><span class="t" style="font-size:7.65px;line-height:9px;color:#3a3a3a;transform:scaleX(0.9393);transform-origin:0 50%;">Forecast</span></div>
<div class="w" style="left:917px;top:160px;transform:translate(0.01px,0.60px) rotate(.0001deg)"><span class="t" style="font-size:7.65px;line-height:9px;color:#3a3a3a;transform:scaleX(0.9253);transform-origin:0 50%;">PRC Auth. (...</span></div>
<div class="w" style="left:1011px;top:148px;transform:translate(calc(-50% + 0.79px),0.40px) rotate(.0001deg)"><span class="t" style="font-size:7.65px;line-height:9px;color:#3a3a3a;letter-spacing:-0.25px;">Sep 21</span></div>
<div class="w" style="left:975px;top:160px;transform:translate(0.74px,0.60px) rotate(.0001deg)"><span class="t" style="font-size:7.65px;line-height:9px;color:#3a3a3a;transform:scaleX(0.9393);transform-origin:0 50%;">Forecast</span></div>
</div><div id="over" class="layer" style="pointer-events:none">
<div class="a" style="left:1014.0px;top:140px;width:10.0px;height:500px;background:#fff"></div>
<div class="a" style="left:1019px;top:109.6px;width:5px;height:531px;background:linear-gradient(90deg,rgba(240,240,240,0),#efefef)"></div>
</div></body></html>
